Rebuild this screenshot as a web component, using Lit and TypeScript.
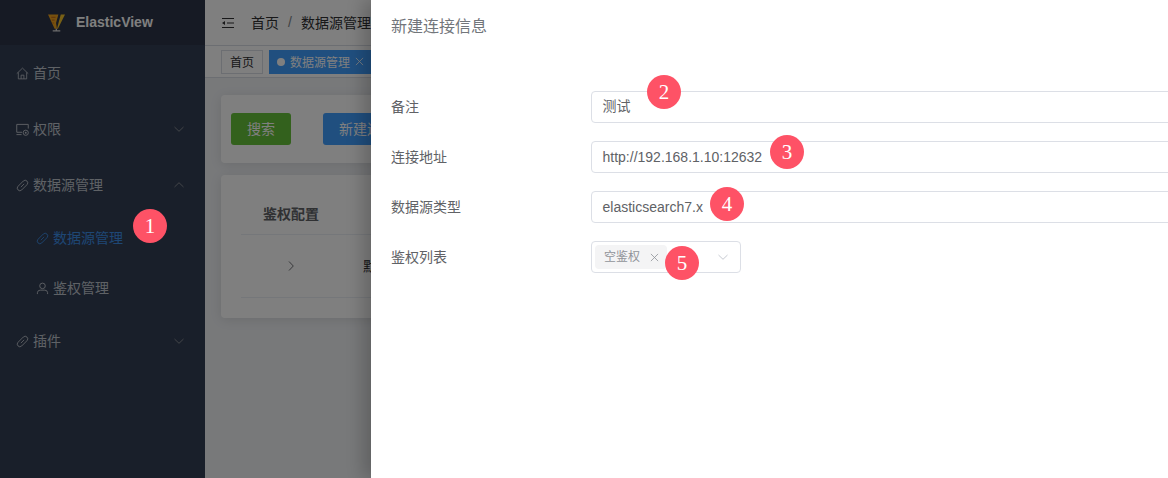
import { LitElement, html, css, svg } from "lit";
import { customElement } from "lit/decorators.js";

const home = svg`<path d="M.8 7.2 7 1.2l6.2 6M2.5 5.8v7h9v-7M5.5 12.8V8.8h3v4" fill="none" stroke="currentColor" stroke-width=".9"/>`;
const monitor = svg`<path d="M6.5 10H.8V1.5h12.4V6M.5 12.5H6" fill="none" stroke="currentColor" stroke-width="1"/><circle cx="10.5" cy="10.5" r="2.8" fill="none" stroke="currentColor" stroke-width="1"/><circle cx="10.5" cy="10.5" r="1" fill="currentColor"/>`;
const link = svg`<g transform="rotate(-45 7 7)" fill="none" stroke="currentColor" stroke-width=".9"><rect x=".2" y="4.2" width="13.6" height="5.6" rx="2.8"/><path d="M4.5 7h5"/></g>`;
const user = svg`<circle cx="7" cy="4.2" r="3" fill="none" stroke="currentColor" stroke-width="1"/><path d="M1.5 13v-1.5A3 3 0 0 1 4.5 8.8h5a3 3 0 0 1 3 2.7V13" fill="none" stroke="currentColor" stroke-width="1"/>`;
const icon = (s: unknown) => html`<svg class="ic" viewBox="0 0 14 14" width="13" height="13">${s}</svg>`;
const chevDown = html`<svg class="chev" viewBox="0 0 12 12" width="12" height="12"><path d="M1.5 4 6 8.3 10.5 4" fill="none" stroke="currentColor" stroke-width=".9"/></svg>`;
const chevUp = html`<svg class="chev" viewBox="0 0 12 12" width="12" height="12"><path d="M1.5 8 6 3.7 10.5 8" fill="none" stroke="currentColor" stroke-width=".9"/></svg>`;
const cross = (c: string) => html`<svg class="x" viewBox="0 0 10 10" width="9" height="9"><path d="M1 1 9 9M9 1 1 9" stroke=${c} stroke-width=".9" fill="none"/></svg>`;

const marks: [number, number][] = [
  [526, 29], [526, 199], [526, 369],
  [761, 114], [761, 284], [761, 450],
  [995, 29], [995, 199], [995, 369],
];
const badges: [number, number, number][] = [
  [1, 150, 226], [2, 664, 92], [3, 787, 152], [4, 727, 204], [5, 682, 263],
];

@customElement("app-root")
export class AppRoot extends LitElement {
  static styles = css`
    :host { display: block; position: relative; width: 1168px; height: 478px; overflow: hidden;
      font-family: "Liberation Sans", "Noto Sans CJK SC", sans-serif; font-size: 14px; background: #fff; }
    .t { margin-bottom: 2px; }
    .app { display: flex; height: 478px; }
    .side { width: 205px; flex: none; background: #323e54; color: #bfc4cc; }
    .logo { height: 45px; background: #2c3448; display: flex; align-items: center; padding-left: 48px; gap: 11px;
      color: #fff; font-weight: 700; font-size: 14px; }
    .logo span { margin-bottom: 1px; }
    .item { height: 56px; display: flex; align-items: center; padding: 0 20px 0 16px; gap: 4px; }
    .item.sub { height: 50px; padding-left: 36px; }
    .item.active { color: #3c8ee8; }
    .ic { flex: none; }
    .chev { margin-left: auto; color: #909399; flex: none; }
    .main { flex: 1; min-width: 0; background: #f0f2f5; }
    .top { height: 45px; background: #fff; display: flex; align-items: center; padding-left: 16px; gap: 16px; color: #303133; white-space: nowrap; }
    .crumb { display: flex; align-items: center; gap: 7px; margin-bottom: 2px; }
    .crumb i { font-style: normal; color: #808488; width: 8px; text-align: center; }
    .tags { height: 33px; background: #fff; border-top: 1px solid #d8dce5; border-bottom: 1px solid #d8dce5; box-sizing: border-box;
      display: flex; align-items: center; padding-left: 16px; gap: 6px; font-size: 12px; white-space: nowrap; }
    .tag { height: 24px; flex: none; display: flex; align-items: center; padding: 0 8px; border: 1px solid #d8dce5; box-sizing: border-box; color: #303133; background: #fff; }
    .tag.on { background: #409eff; border-color: #409eff; color: #fff; gap: 5px; padding: 0 12px 0 7px; }
    .dot { width: 8px; height: 8px; border-radius: 50%; background: #fff; }
    .body { padding: 17px 16px; display: flex; flex-direction: column; gap: 12px; }
    .card { background: #fff; border-radius: 4px; box-shadow: 0 2px 12px rgba(0,0,0,.1); }
    .bar { height: 68px; box-sizing: border-box; padding: 18px 10px; display: flex; gap: 32px; white-space: nowrap; }
    .btn { height: 32px; width: 60px; flex: none; box-sizing: border-box; border-radius: 3px; color: #fff; display: flex; align-items: center; padding-left: 16px; }
    .green { background: #67c23a; }
    .blue { background: #409eff; width: 120px; }
    .tbl { height: 143px; box-sizing: border-box; padding: 20px; }
    .th { height: 39px; border-bottom: 1px solid #ebeef5; padding-left: 22px; font-weight: 700; color: #606266; line-height: 38px; }
    .tr { height: 63px; box-sizing: border-box; border-bottom: 1px solid #ebeef5; display: flex; align-items: center; padding-left: 44px; gap: 66px; color: #303133; white-space: nowrap; }
    .tr .chev { margin: 0; color: #606266; }
    .mask { position: absolute; inset: 0; background: rgba(0,0,0,.5); }
    .drawer { position: absolute; left: 371px; top: 0; right: 0; bottom: 0; background: #fff; overflow: hidden;
      box-shadow: -8px 0 16px rgba(0,0,0,.2); padding: 0 20px; }
    .title { height: 54px; line-height: 53px; color: #72767b; font-size: 16px; margin-bottom: 37px; }
    .row { display: flex; align-items: center; height: 32px; margin-bottom: 18px; color: #606266; }
    .label { width: 200px; flex: none; margin-bottom: 2px; }
    .input { flex: none; width: 700px; height: 32px; box-sizing: border-box; border: 1px solid #dcdfe6; border-radius: 4px;
      padding: 0 10.5px; line-height: 30px; color: #606266; }
    .cjk { line-height: 28px; }
    .select { width: 150px; padding: 0 0 0 3px; display: flex; align-items: center; }
    .chip { width: 72px; height: 24px; box-sizing: border-box; background: #f4f4f5; border-radius: 4px; color: #909399; font-size: 12px;
      display: flex; align-items: center; padding-left: 9px; gap: 10px; }
    .x { flex: none; }
    .select .chev { margin: 0 11px 0 auto; color: #c0c4cc; }
    .wm { position: absolute; transform: translate(-50%, -50%) rotate(-24.5deg); color: rgba(0,0,0,.022); font-size: 16px; white-space: nowrap; }
    .badge { position: absolute; width: 34px; height: 34px; margin: -17px 0 0 -17px; border-radius: 50%; background: #fe5266; color: #fff;
      font-family: "Liberation Serif", serif; font-size: 21px; display: flex; align-items: center; justify-content: center; }
  `;

  render() {
    return html`
      <div class="app">
        <aside class="side">
          <div class="logo">
            <svg viewBox="0 0 18 18" width="17" height="18">
              <path d="M0 0h11L8.5 9l1 6H7z" fill="#eea21c"/>
              <path d="M3.5 3h4.5M4 6h3M4.5 9h2" stroke="#c9701a" stroke-width="1.3" fill="none"/>
              <path d="M13.5 0H18L10.5 15H9.5z" fill="#f1c02b"/>
              <path d="M8.8 15v2M5 17.3h8" stroke="#d8d8d8" stroke-width="1.4" fill="none"/>
            </svg>
            <span>ElasticView</span>
          </div>
          <div class="item">${icon(home)}<span class="t">首页</span></div>
          <div class="item">${icon(monitor)}<span class="t">权限</span>${chevDown}</div>
          <div class="item">${icon(link)}<span class="t">数据源管理</span>${chevUp}</div>
          <div class="item sub active">${icon(link)}<span class="t">数据源管理</span></div>
          <div class="item sub">${icon(user)}<span class="t">鉴权管理</span></div>
          <div class="item">${icon(link)}<span class="t">插件</span>${chevDown}</div>
        </aside>
        <main class="main">
          <div class="top">
            <svg viewBox="0 0 14 12" width="14" height="12"><path d="M1 1.5h12M6 6h7M1 10.5h12" stroke="#303133" fill="none"/><path d="M4 4v4L1 6z" fill="#303133"/></svg>
            <div class="crumb"><span>首页</span><i>/</i><span>数据源管理</span></div>
          </div>
          <div class="tags">
            <div class="tag">首页</div>
            <div class="tag on"><span class="dot"></span><span>数据源管理</span>${cross("#fff")}</div>
          </div>
          <div class="body">
            <div class="card bar"><div class="btn green"><span class="t">搜索</span></div><div class="btn blue"><span class="t">新建连接</span></div></div>
            <div class="card tbl">
              <div class="th">鉴权配置</div>
              <div class="tr"><svg class="chev" viewBox="0 0 12 12" width="12" height="12"><path d="M4 1.5 8.3 6 4 10.5" fill="none" stroke="currentColor" stroke-width=".9"/></svg><span class="t">默认</span></div>
            </div>
          </div>
        </main>
      </div>
      <div class="mask"></div>
      <section class="drawer">
        <div class="title">新建连接信息</div>
        <div class="row"><div class="label">备注</div><div class="input cjk">测试</div></div>
        <div class="row"><div class="label">连接地址</div><div class="input">http://192.168.1.10:12632</div></div>
        <div class="row"><div class="label">数据源类型</div><div class="input">elasticsearch7.x</div></div>
        <div class="row"><div class="label">鉴权列表</div>
          <div class="input select">
            <div class="chip">空鉴权${cross("#909399")}</div>
            ${chevDown}
          </div>
        </div>
      </section>
      ${marks.map(([x, y]) => html`<div class="wm" style="left:${x}px;top:${y}px">ElasticView_v0.0.7</div>`)}
      ${badges.map(([n, x, y]) => html`<div class="badge" style="left:${x}px;top:${y}px">${n}</div>`)}
    `;
  }
}
